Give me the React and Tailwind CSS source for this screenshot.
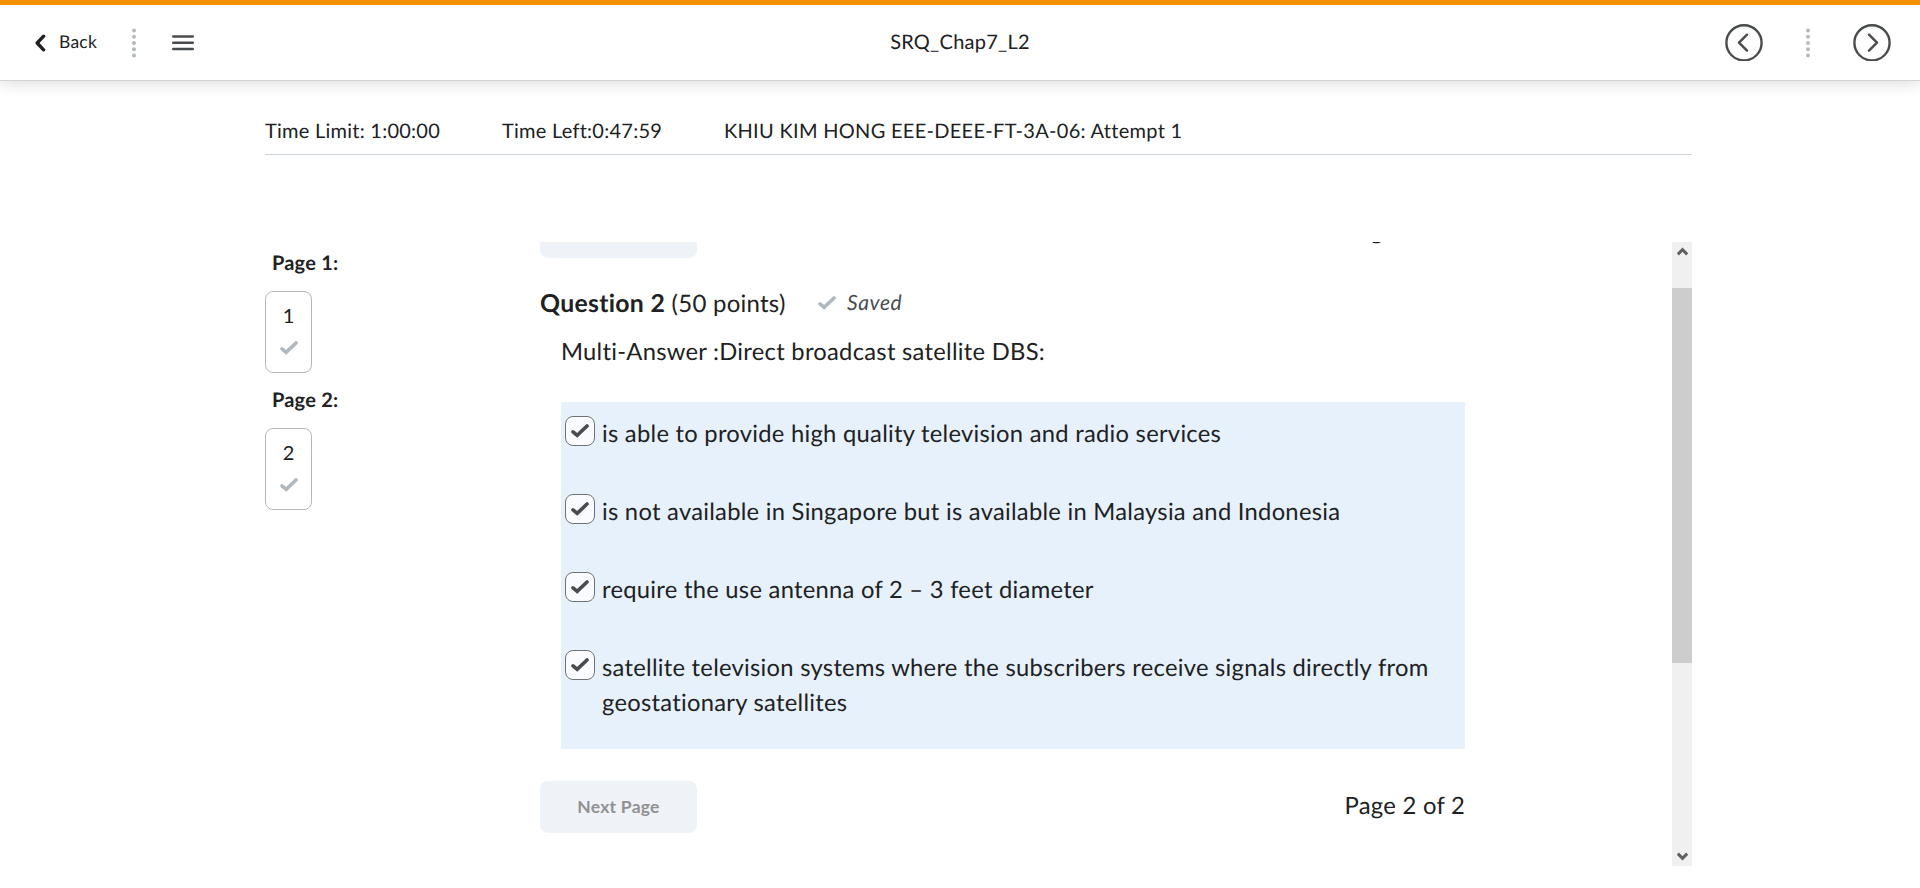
const OPTIONS = [
  "is able to provide high quality television and radio services",
  "is not available in Singapore but is available in Malaysia and Indonesia",
  "require the use antenna of 2 – 3 feet diameter",
  "satellite television systems where the subscribers receive signals directly from geostationary satellites",
];

function Check({ className }) {
  return (
    <svg className={className} viewBox="0 0 18 14" fill="none" stroke="currentColor" strokeWidth="3.6" strokeLinecap="round" strokeLinejoin="miter">
      <path d="M2 7.8 L6.2 11.4 L16 2" />
    </svg>
  );
}

function Dots() {
  return (
    <svg className="h-[30px] w-1 shrink-0 text-[#b1b9be]" viewBox="0 0 4 30" fill="currentColor">
      <circle cx="2" cy="2.5" r="1.95" />
      <circle cx="2" cy="8.75" r="1.95" />
      <circle cx="2" cy="15" r="1.95" />
      <circle cx="2" cy="21.25" r="1.95" />
      <circle cx="2" cy="27.5" r="1.95" />
    </svg>
  );
}

function RoundArrow({ d }) {
  return (
    <svg className="h-[37px] w-[38px] shrink-0" viewBox="0 0 38 37" fill="none" stroke="#494c4e" strokeWidth="2.4" strokeLinecap="round" strokeLinejoin="round">
      <circle cx="19" cy="18.8" r="17.6" />
      <path d={d} />
    </svg>
  );
}

function PageNav({ page }) {
  return (
    <section className="h-[137px]">
      <h2 className="pl-[7px] text-[20px] leading-[30px] font-bold tracking-[0.2px]">Page {page}:</h2>
      <button className="mt-[13px] flex h-[82px] w-[47px] flex-col items-center rounded-lg border border-[#b1b9be] pt-2">
        <span className="text-[20px] leading-[30px]">{page}</span>
        <Check className="mt-[11px] h-[14px] w-[18px] text-[#b1b9be]" />
      </button>
    </section>
  );
}

export default function App() {
  return (
    <div className="flex h-[888px] w-[1920px] flex-col overflow-hidden bg-white font-['Lato',sans-serif] text-[#202122] [text-rendering:geometricPrecision]">
      <header className="flex h-[81px] shrink-0 items-center border-t-5 border-b border-t-[#f59100] border-b-[#d3d3d3] bg-white shadow-[0_2px_15px_rgba(0,0,0,0.15)]">
        <div className="flex flex-1 items-center">
          <svg className="ml-[35px] h-[18px] w-[11px]" viewBox="0 0 11 18" fill="none" stroke="#202122" strokeWidth="3.4" strokeLinecap="round" strokeLinejoin="round">
            <path d="M8.6 2.2 L2.2 9 L8.6 15.8" />
          </svg>
          <span className="ml-[13px] w-[73px] pb-px text-[17.5px] tracking-[0.25px]">Back</span>
          <Dots />
          <svg className="ml-9 h-[18px] w-[22px]" viewBox="0 0 22 18" stroke="#494c4e" strokeWidth="2.4" strokeLinecap="round">
            <path d="M1.2 2.5 H20.8 M1.2 8.75 H20.8 M1.2 15 H20.8" />
          </svg>
        </div>
        <h1 className="w-[142px] pb-px text-center text-[20px] whitespace-nowrap tracking-[0.25px]">SRQ_Chap7_L2</h1>
        <div className="flex flex-1 items-center justify-end">
          <RoundArrow d="M22 10.7 L14 18.7 L22 26.7" />
          <div className="mx-[43px] flex">
            <Dots />
          </div>
          <div className="w-[67px]">
            <RoundArrow d="M16 10.7 L24 18.7 L16 26.7" />
          </div>
        </div>
      </header>

      <main className="ml-[265px] flex w-[1427px] flex-1 flex-col">
        <div className="flex h-[74px] shrink-0 border-b border-[#cdd5dc] pt-[35px] text-[20px] leading-[30px] tracking-[0.25px]">
          <span className="w-[237px]">Time Limit: 1:00:00</span>
          <span className="w-[222px]">Time Left:0:47:59</span>
          <span className="tracking-[0.3px]">KHIU KIM HONG EEE-DEEE-FT-3A-06: Attempt 1</span>
        </div>

        <div className="mt-[87px] flex h-[624px]">
          <nav className="w-[275px] pt-[6px]">
            <PageNav page={1} />
            <PageNav page={2} />
          </nav>

          <div className="flex flex-1 flex-col overflow-hidden">
            <div className="-mt-[35px] flex h-[51px] w-[925px] shrink-0 items-start justify-between">
              <div className="h-[51px] w-[157px] rounded-lg bg-[#eff2f7]" />
              <span className="text-[23.85px] leading-[48px] tracking-[0.25px]">Page 2 of 2</span>
            </div>
            <div className="mt-[27px] flex h-9 items-center">
              <h2 className="w-[278px] pt-px text-[24px] leading-9 tracking-[0.25px]">
                <strong className="text-[24.8px] tracking-[0.3px]">Question 2</strong> (50 points)
              </h2>
              <Check className="h-[14px] w-[18px] text-[#b1b9be]" />
              <em className="ml-[11px] text-[21px] leading-9 tracking-[0.6px] text-[#494c4e]">Saved</em>
            </div>
            <p className="mt-[13px] pl-[21px] text-[23.75px] leading-9 tracking-[0.27px]">Multi-Answer :Direct broadcast satellite DBS:</p>

            <div className="mt-8 ml-[21px] flex h-[347px] w-[904px] shrink-0 flex-col gap-[43px] bg-[#e7f1fc] pt-[14px] pl-1">
              {OPTIONS.map((text) => (
                <label key={text} className="flex h-[35px] items-start">
                  <span className="flex size-[30px] shrink-0 items-center justify-center rounded-lg border border-[#6e7376] bg-[#f9fbff]">
                    <Check className="h-[14px] w-[18px] text-[#494c4e]" />
                  </span>
                  <span className="ml-[7px] w-[850px] pt-px text-[23.75px] leading-[35px] tracking-[0.27px]">{text}</span>
                </label>
              ))}
            </div>

            <div className="mt-8 flex w-[925px] items-start justify-between">
              <button className="h-[52px] w-[157px] rounded-lg bg-[#eff2f7] text-[17.5px] font-bold tracking-[0.25px] text-[#909192]">Next Page</button>
              <span className="pt-px text-[23.85px] leading-[48px] tracking-[0.25px]">Page 2 of 2</span>
            </div>
          </div>

          <div className="flex w-5 flex-col items-center justify-between bg-[#f0f0f0] pt-[5px] pb-[5px]">
            <svg className="h-[9px] w-[11px]" viewBox="0 0 11 9" fill="none" stroke="#606060" strokeWidth="3">
              <path d="M0.8 7.4 L5.5 2.7 L10.2 7.4" />
            </svg>
            <div className="mt-8 h-[375px] w-5 bg-[#cdcdcd]" />
            <div className="flex-1" />
            <svg className="h-[9px] w-[11px]" viewBox="0 0 11 9" fill="none" stroke="#606060" strokeWidth="3">
              <path d="M0.8 1.6 L5.5 6.3 L10.2 1.6" />
            </svg>
          </div>
        </div>
      </main>
    </div>
  );
}
